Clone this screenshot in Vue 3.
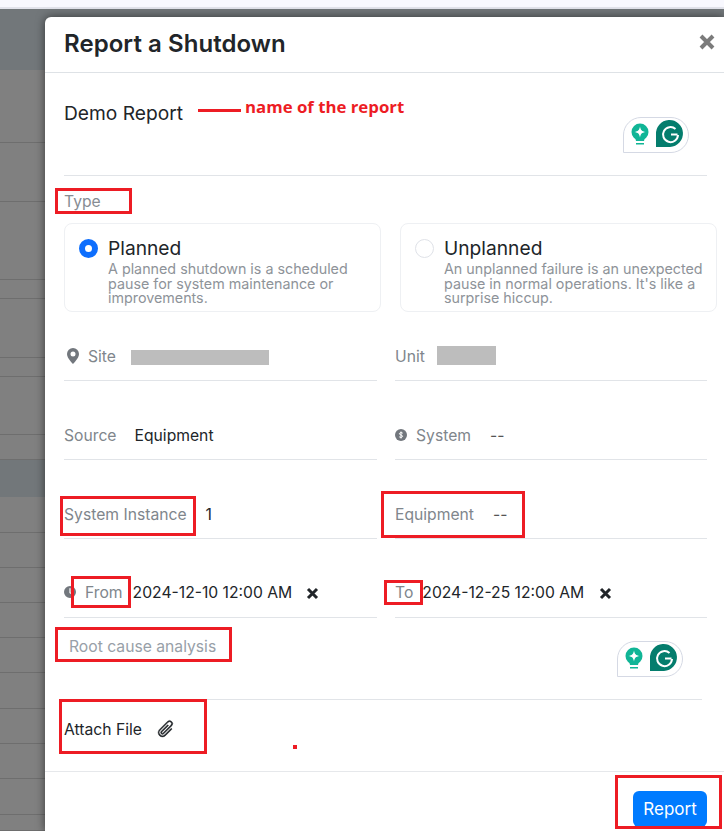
<script setup>
const rows = [61, 73, 59, 78, 19, 59, 19, 58, 25, 37, 36, 35, 35, 35, 35, 36, 35, 35, 36, 16]
const rowList = rows.map((h, i) => ({ h, band: i === 0 || i === 9 }))

const boxes = [
  { x: 55, y: 188, w: 77, h: 26 },
  { x: 60, y: 496, w: 136, h: 40 },
  { x: 381, y: 491, w: 144, h: 47 },
  { x: 71, y: 576, w: 60, h: 32 },
  { x: 384, y: 580, w: 39, h: 25 },
  { x: 55, y: 627, w: 177, h: 35 },
  { x: 59, y: 699, w: 148, h: 55 },
  { x: 615, y: 775, w: 107, h: 54 }
]
</script>

<template>
  <div class="page">
    <div class="strip"></div>
    <div class="strip-line"></div>
    <div class="table">
      <div
        v-for="(r, i) in rowList"
        :key="i"
        class="row"
        :class="{ band: r.band }"
        :style="{ height: r.h + 'px' }"
      ></div>
    </div>

    <section class="modal">
      <header class="head">
        <h1>Report a Shutdown</h1>
        <button class="close" aria-label="Close">
          <svg width="16" height="16" viewBox="0 0 16 16"><path d="M2 2l12 12M14 2L2 14" stroke="#7b7b7b" stroke-width="4" fill="none" /></svg>
        </button>
      </header>

      <div class="body">
        <div class="name">
          <span>Demo Report</span>
          <svg class="gram gram-a" width="66" height="36" viewBox="0 0 66 36">
            <path d="M.5 35.500V18A17.500 17.500 0 0 1 18 .5h30a17.500 17.500 0 0 1 0 35z" fill="#fff" stroke="#d5d9e4" />
            <circle cx="17" cy="15" r="8.500" fill="#10b596" />
            <path d="M12 20h10l-1 4h-8zM13 26h8v1.500h-8z" fill="#10b596" />
            <path d="M17 9.500c.7 3.700 1.800 4.800 5.500 5.500-3.700.7-4.800 1.800-5.500 5.500-.7-3.700-1.800-4.800-5.500-5.500 3.700-.7 4.800-1.800 5.500-5.500z" fill="#fff" />
            <path d="M33 30V17.500a13.500 13.500 0 1 1 14 12.500z" fill="#047d6d" />
            <path d="M54.500 17.500h-6.500M55 18a7.500 7.500 0 1 1-2.500-6" fill="none" stroke="#fff" stroke-width="2" />
          </svg>
        </div>

        <div class="type">Type</div>

        <div class="cards">
          <label class="card">
            <span class="radio on"></span>
            <span class="card-text">
              <strong>Planned</strong>
              <small>A planned shutdown is a scheduled pause for system maintenance or improvements.</small>
            </span>
          </label>
          <label class="card">
            <span class="radio"></span>
            <span class="card-text">
              <strong>Unplanned</strong>
              <small>An unplanned failure is an unexpected pause in normal operations. It's like a surprise hiccup.</small>
            </span>
          </label>
        </div>

        <div class="grid">
          <div class="field">
            <svg class="ic pin" width="14" height="16" viewBox="2 0 12 16"><path fill="#72777d" d="M8 16s6-5.686 6-10A6 6 0 0 0 2 6c0 4.314 6 10 6 10zm0-7.500a2.500 2.500 0 1 1 0-5 2.500 2.500 0 0 1 0 5z" /></svg>
            <span class="lab">Site</span>
            <span class="redact site"></span>
          </div>
          <div class="field">
            <span class="lab">Unit</span>
            <span class="redact unit"></span>
          </div>

          <div class="field">
            <span class="lab">Source</span>
            <span class="val source">Equipment</span>
          </div>
          <div class="field">
            <svg class="ic sys" width="12" height="12" viewBox="0 0 12 12">
              <circle cx="6" cy="6" r="6" fill="#72777d" />
              <path d="M7.800 4.300C7.400 3.500 4.500 3.300 4.400 4.700 4.300 6.200 7.700 5.800 7.600 7.300 7.500 8.700 4.600 8.500 4.200 7.700M6 2.500v7" fill="none" stroke="#fff" stroke-width="1" />
            </svg>
            <span class="lab">System</span>
            <span class="val dash sysdash">--</span>
          </div>

          <div class="field">
            <span class="lab">System Instance</span>
            <span class="val inst">1</span>
          </div>
          <div class="field">
            <span class="lab">Equipment</span>
            <span class="val dash eqdash">--</span>
          </div>

          <div class="field date">
            <svg class="ic clock" width="12" height="12" viewBox="0 0 16 16"><path fill="#72777d" d="M16 8A8 8 0 1 1 0 8a8 8 0 0 1 16 0zM8.800 3.500a.8.800 0 0 0-1.600 0V9a.8.800 0 0 0 .4.700l3.500 2a.8.800 0 0 0 .8-1.400L8.800 8.500V3.500z" /></svg>
            <span class="lab from">From</span>
            <span class="val from-val">2024-12-10 12:00 AM</span>
            <svg class="x x-from" width="13" height="13" viewBox="0 0 13 13"><path d="M2 2l9 9M11 2l-9 9" stroke="#212529" stroke-width="3" fill="none" /></svg>
          </div>
          <div class="field date">
            <span class="lab">To</span>
            <span class="val to-val">2024-12-25 12:00 AM</span>
            <svg class="x x-to" width="13" height="13" viewBox="0 0 13 13"><path d="M2 2l9 9M11 2l-9 9" stroke="#212529" stroke-width="3" fill="none" /></svg>
          </div>
        </div>

        <div class="root">
          <span>Root cause analysis</span>
          <svg class="gram gram-b" width="66" height="36" viewBox="0 0 66 36">
            <path d="M.5 35.500V18A17.500 17.500 0 0 1 18 .5h30a17.500 17.500 0 0 1 0 35z" fill="#fff" stroke="#d5d9e4" />
            <circle cx="17" cy="15" r="8.500" fill="#10b596" />
            <path d="M12 20h10l-1 4h-8zM13 26h8v1.500h-8z" fill="#10b596" />
            <path d="M17 9.500c.7 3.700 1.800 4.800 5.500 5.500-3.700.7-4.800 1.800-5.500 5.500-.7-3.700-1.800-4.800-5.500-5.500 3.700-.7 4.800-1.800 5.500-5.500z" fill="#fff" />
            <path d="M33 30V17.500a13.500 13.500 0 1 1 14 12.500z" fill="#047d6d" />
            <path d="M54.500 17.500h-6.500M55 18a7.500 7.500 0 1 1-2.500-6" fill="none" stroke="#fff" stroke-width="2" />
          </svg>
        </div>

        <div class="attach">
          <span>Attach File</span>
          <svg class="clip" width="20" height="20" viewBox="0 0 16 16">
            <g transform="rotate(45 8 8)">
              <path fill="#212529" stroke="#212529" stroke-width=".3" d="M4.500 3a2.500 2.500 0 0 1 5 0v9a1.500 1.500 0 0 1-3 0V5a.5.5 0 0 1 1 0v7a.5.5 0 0 0 1 0V3a1.500 1.500 0 1 0-3 0v9a2.500 2.500 0 0 0 5 0V5a.5.5 0 0 1 1 0v7a3.500 3.500 0 1 1-7 0V3z" />
            </g>
          </svg>
        </div>
      </div>

      <footer class="foot">
        <button class="report">Report</button>
      </footer>
    </section>

    <div
      v-for="(b, i) in boxes"
      :key="i"
      class="mark"
      :style="{ left: b.x + 'px', top: b.y + 'px', width: b.w + 'px', height: b.h + 'px' }"
    ></div>
    <div class="red-line"></div>
    <div class="red-text">name of the report</div>
    <div class="red-dot"></div>
  </div>
</template>

<style>
html, body { margin: 0; overflow: hidden; }
</style>

<style scoped>
.page {
  position: relative;
  width: 724px;
  height: 831px;
  overflow: hidden;
  font-family: Inter, "Liberation Sans", sans-serif;
  background: #808080;
  color: #212529;
}
.strip { height: 7px; background: #f8f8fe; }
.strip-line { height: 2px; background: #e2e3eb; }
.row { box-sizing: border-box; background: #808080; border-bottom: 1px solid #6e6e6e; }
.row.band { background: #72777a; border-bottom: 0; }

.modal {
  position: absolute;
  left: 45px;
  top: 17px;
  right: 0;
  bottom: 0;
  background: #fff;
  border-top-left-radius: 6px;
  box-shadow: 0 0 10px rgba(0, 0, 0, .55);
  display: flex;
  flex-direction: column;
}
.head {
  height: 56px;
  box-sizing: border-box;
  border-bottom: 1px solid #dee2e6;
  display: flex;
  align-items: center;
  justify-content: space-between;
  padding: 0 9px 2px 19px;
}
h1 { margin: 0; font-size: 24px; line-height: 1; font-weight: 600; letter-spacing: .06px; }
.close { all: unset; display: flex; margin-top: -3px; }

.body { flex: 1; padding-left: 19px; }
.name {
  position: relative;
  width: 643px;
  height: 103px;
  box-sizing: border-box;
  border-bottom: 1px solid #e1e4e8;
  padding-top: 29px;
  font-size: 19.200px;
  line-height: 22px;
}
.gram { position: absolute; }
.gram-a { left: 559px; top: 44px; }
.type { margin-top: 16px; font-size: 15.700px; line-height: 20px; color: #868c93; height: 31px; }

.cards { display: flex; gap: 19px; height: 89px; }
.card {
  width: 317px;
  box-sizing: border-box;
  border: 1px solid #eef0f3;
  border-radius: 8px;
  padding: 15px 6px 0 14px;
  display: flex;
  gap: 10px;
}
.radio {
  flex: none;
  width: 19px;
  height: 19px;
  box-sizing: border-box;
  border-radius: 50%;
  border: 1px solid #dfe2e8;
}
.radio.on { border: 6px solid #0d6efd; }
.card-text { display: flex; flex-direction: column; margin-top: -1px; }
.card-text strong { font-weight: 400; font-size: 19.200px; line-height: 20px; color: #212529; }
.card-text small { font-size: 14.300px; line-height: 14.500px; color: #8e9399; margin-top: 4px; }

.grid {
  display: grid;
  grid-template-columns: 313px 312px;
  column-gap: 18px;
  row-gap: 32px;
  padding-top: 22px;
}
.field {
  position: relative;
  height: 47px;
  box-sizing: border-box;
  border-bottom: 1px solid #e1e4e8;
  padding-bottom: 2px;
  display: flex;
  align-items: center;
  font-size: 15.700px;
}
.field.date { padding-bottom: 4px; }
.lab { color: #80868c; white-space: nowrap; }
.val { white-space: nowrap; color: #212529; }
.dash { color: #555; }
.ic { flex: none; }
.pin { margin: 0 8px 0 2px; }
.sys, .clock { margin-right: 9px; }
.redact { background: #bdbdbd; }
.site { width: 138px; height: 15px; margin: 2px 0 0 15px; }
.unit { width: 59px; height: 19px; margin: -2px 0 0 12px; }
.source { margin-left: 18px; }
.sysdash { margin-left: 19px; }
.inst { margin-left: 19px; }
.eqdash { margin-left: 19px; }
.from-val { margin-left: 10px; }
.to-val { margin-left: 9px; }
.x { margin-top: 2px; }
.x-from { margin-left: 14px; }
.x-to { margin-left: 15px; }

.root {
  position: relative;
  width: 638px;
  height: 82px;
  box-sizing: border-box;
  border-bottom: 1px solid #e1e4e8;
  padding: 19px 0 0 5px;
  font-size: 15.700px;
  line-height: 20px;
  color: #98a0a8;
}
.gram-b { left: 553px; top: 23px; }

.attach {
  height: 70px;
  display: flex;
  align-items: center;
  gap: 14px;
  font-size: 15.700px;
  padding-bottom: 12px;
  box-sizing: border-box;
}

.foot {
  position: absolute;
  left: 0;
  right: 0;
  top: 754px;
  height: 60px;
  border-top: 1px solid #e6e8eb;
}
.report {
  position: absolute;
  left: 588px;
  top: 19px;
  width: 74px;
  height: 36px;
  border: 0;
  border-radius: 6px;
  background: #007bff;
  color: #fff;
  font: 400 17px Inter, "Liberation Sans", sans-serif;
}

.mark {
  position: absolute;
  box-sizing: border-box;
  border: 3px solid #ed1c24;
  pointer-events: none;
}
.red-line {
  position: absolute;
  left: 198px;
  top: 109px;
  width: 43px;
  height: 3px;
  background: #ed1c24;
}
.red-text {
  position: absolute;
  left: 245px;
  top: 97px;
  font: 700 16.800px/20px "Open Sans", sans-serif;
  color: #ed1c24;
  white-space: nowrap;
}
.red-dot {
  position: absolute;
  left: 293px;
  top: 745px;
  width: 4px;
  height: 4px;
  background: #ed1c24;
}
</style>
